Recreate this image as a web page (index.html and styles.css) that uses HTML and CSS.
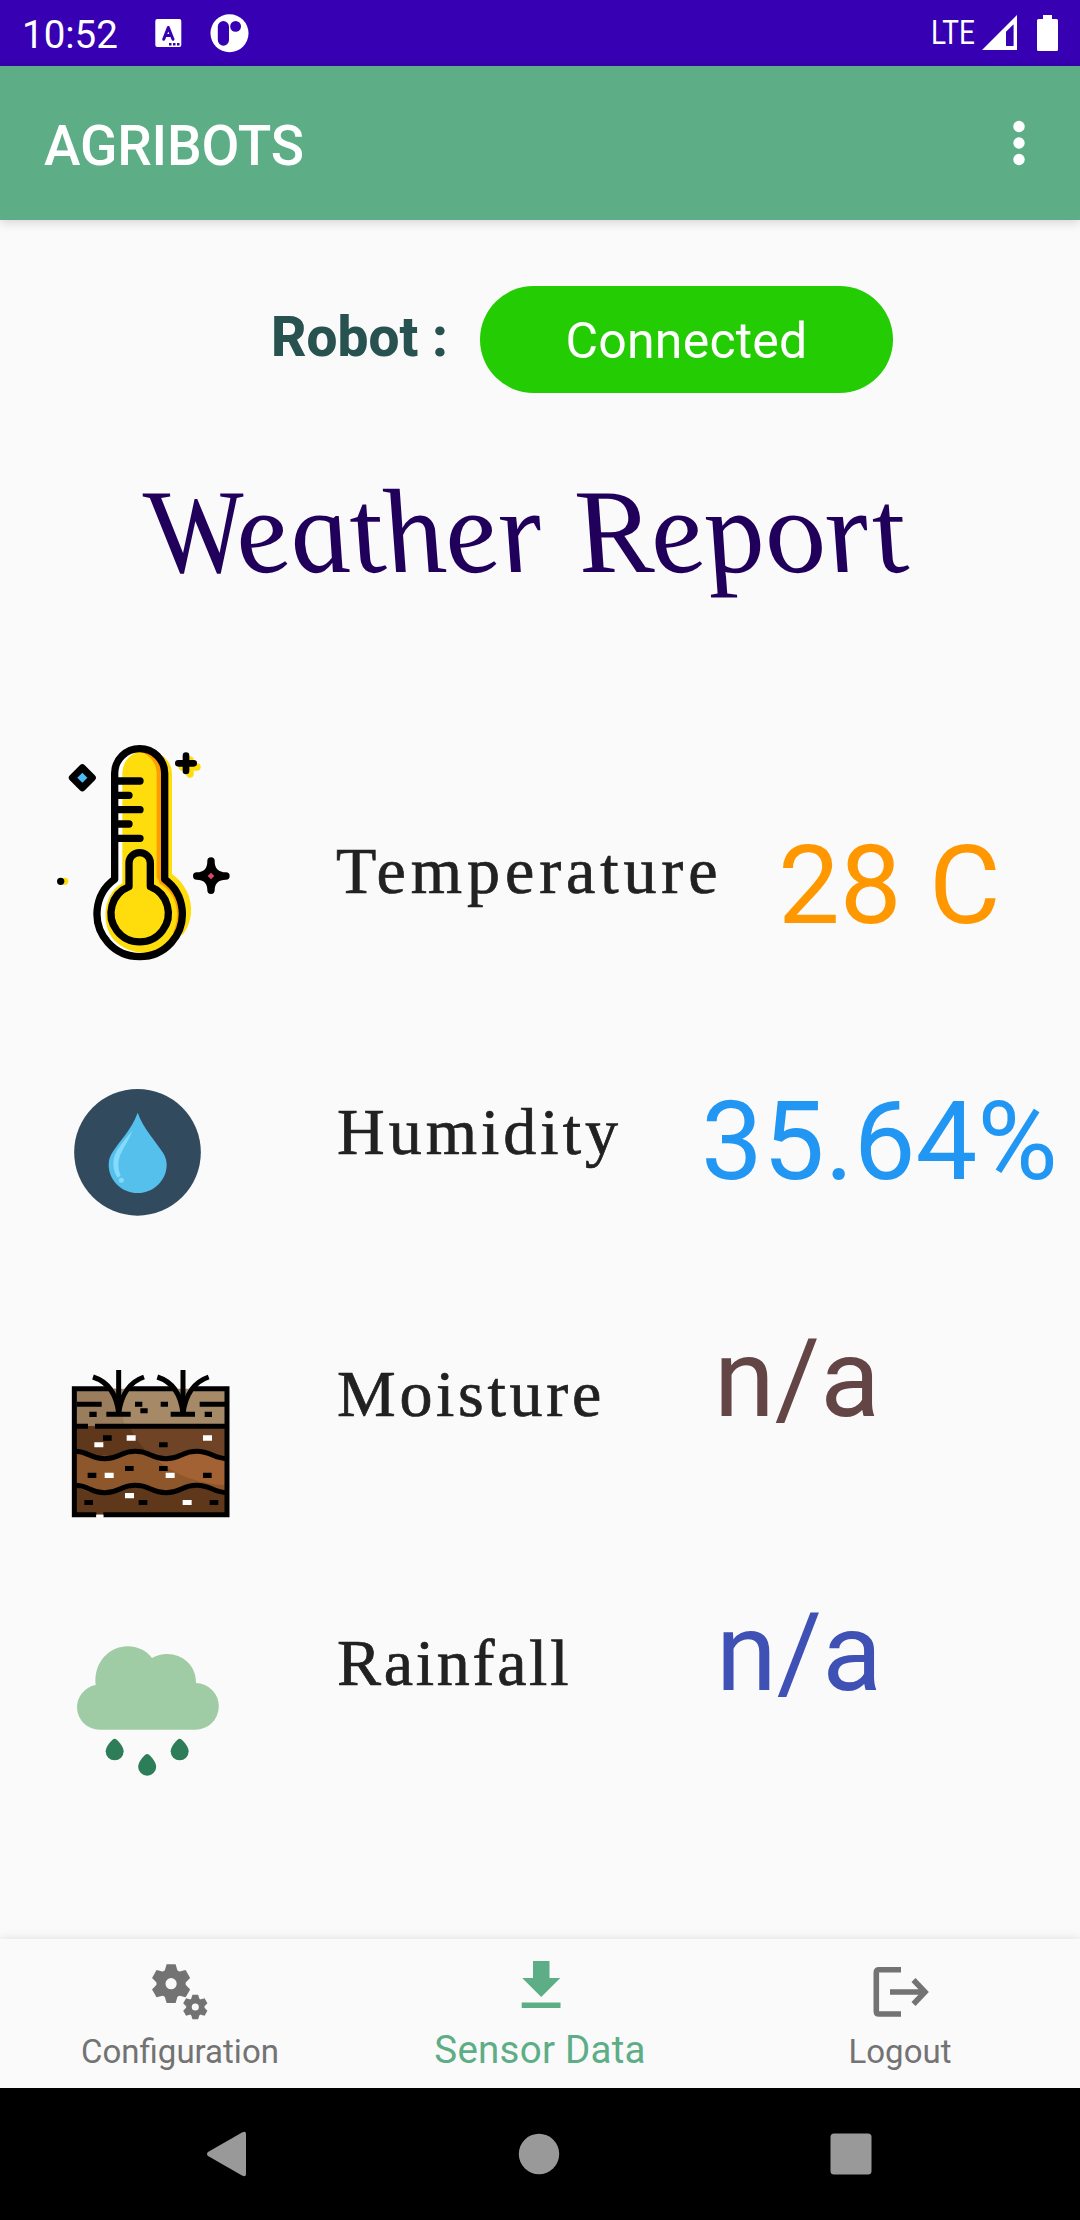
FILE: index.html
```html
<!DOCTYPE html>
<html lang="en">
<head>
<meta charset="utf-8">
<title>AGRIBOTS</title>
<link rel="stylesheet" href="styles.css">
</head>
<body>
<div class="screen">
  <div class="status-bar">
    <span class="clock">10:52</span>
    <svg class="notices" width="100" height="66" viewBox="150 0 100 66" fill="#fff">
      <rect x="155.3" y="19" width="26" height="28" rx="2"/>
      <path d="M163.7 39.3L168.3 27.5L173 39.3M165.3 35.6H171.5" fill="none" stroke="#3700b3" stroke-width="3" stroke-linecap="round" stroke-linejoin="round"/>
      <path d="M169 43h2.5v2.4H169zM173 43h2.5v2.4H173zM177 43h2.5v2.4H177z" fill="#3700b3"/>
      <circle cx="229.5" cy="33.2" r="19"/>
      <rect x="217.8" y="21" width="11.2" height="24.7" rx="5.6" fill="#3700b3"/>
      <circle cx="235.6" cy="26.4" r="5.4" fill="#3700b3"/>
    </svg>
    <span class="network">LTE</span>
    <svg class="signals" width="98" height="66" viewBox="982 0 98 66" fill="#fff">
      <path fill-rule="evenodd" d="M982 50L1017 15V50ZM1006 31.7V46H1013.6V24.2Z"/>
      <path d="M1043 15h9v4h4.500q1.500 0 1.500 1.500v29q0 1.500-1.500 1.500h-18q-1.500 0-1.500-1.500v-29q0-1.500 1.500-1.500h4.500z"/>
    </svg>
  </div>
  <header class="app-bar">
    <h1 class="app-title">AGRIBOTS</h1>
    <svg class="overflow" width="12" height="46" viewBox="0 0 12 46" fill="#fff">
      <circle cx="6" cy="6.500" r="5.700"/><circle cx="6" cy="23" r="5.700"/><circle cx="6" cy="39.500" r="5.700"/>
    </svg>
  </header>

  <main class="content">
    <div class="robot">
      <span class="robot-label">Robot :</span>
      <span class="robot-state">Connected</span>
    </div>
    <h2 class="report-title">Weather Report</h2>

    <section class="reading reading-temperature">
      <svg class="reading-icon" width="210" height="240" viewBox="0 0 630 720">
        <path d="M250 135C250 40 396 40 396 135V432C462 480 468 560 430 612L300 680L200 570Z" fill="#ffdc0b"/>
        <path d="M224 125a75 70 0 0 1 150 0V448C450 490 440 580 408 625C360 690 235 690 192 625C150 565 172 485 224 448Z" fill="#fff"/>
        <path d="M247 130a63 66 0 0 1 126 0V448C440 490 440 580 408 625C360 685 270 680 222 630C180 580 190 490 247 460Z" fill="#ffdc0b"/>
        <path d="M302 62C350 62 374 92 374 125V448C440 490 435 580 398 610C430 545 400 480 360 462L350 440V130C350 100 330 75 302 66Z" fill="#ff9d00"/>
        <g fill="none" stroke="#000" stroke-width="22" stroke-linecap="round" stroke-linejoin="round">
          <path d="M224 448V130a75 74 0 0 1 150 0V448A128 128 0 1 1 224 448Z"/>
          <path d="M267 470V398a32 30 0 0 1 64 0V470A86 86 0 1 1 267 470Z" fill="#ffdc0b"/>
          <path d="M224 153H300M224 196H267M224 239H300M224 282H267M224 325H300"/>
        </g>
        <path d="M450 90V132M427 111H471" stroke="#ffdc0b" stroke-width="22" stroke-linecap="round"/>
        <path d="M438 77V123M415 100H461" stroke="#000" stroke-width="20" stroke-linecap="round"/>
        <path d="M127 113L157 143L127 173L97 143Z" fill="#48bdf7" stroke="#000" stroke-width="21" stroke-linejoin="round"/>
        <circle cx="74" cy="454" r="11" fill="#ffdc0b"/><circle cx="62" cy="454" r="11"/>
        <path d="M513 393Q513 438 558 438Q513 438 513 481Q513 438 470 438Q513 438 513 393Z" stroke="#000" stroke-width="22" stroke-linejoin="round"/>
        <path d="M513 415L536 438L513 461L490 438Z"/>
        <path d="M513 428L523 438L513 448L503 438Z" fill="#dc4868"/>
      </svg>
      <span class="reading-name">Temperature</span>
      <span class="reading-value">28 C</span>
    </section>

    <section class="reading reading-humidity">
      <svg class="reading-icon" width="180" height="160" viewBox="0 0 540 480">
        <circle cx="262.500" cy="247" r="190" fill="#324a5e"/>
        <path d="M263 128C282 180 318 214 340 250C346 262 350 270 350 284C350 331 311 369 263 369C215 369 176 331 176 284C176 270 180 258 188 246C212 208 244 180 263 128Z" fill="#54c0eb"/>
        <path d="M248 181C220 217 190 244 190 279Q190 303 202 323L212 317Q204 300 205 281C207 247 234 219 248 181Z" fill="#84dbff"/>
        <circle cx="214" cy="331" r="7.500" fill="#84dbff"/>
      </svg>
      <span class="reading-name">Humidity</span>
      <span class="reading-value">35.64%</span>
    </section>

    <section class="reading reading-moisture">
      <svg class="reading-icon" width="180" height="170" viewBox="0 0 540 510">
        <path d="M43 86H501V198H43Z" fill="#a68a68"/>
        <path d="M43 86H180Q178 140 195 198H43Z" fill="#9a7d5c"/>
        <path d="M43 198H501V300H43Z" fill="#6f4325"/>
        <path d="M43 198H207Q225 240 270 285H43Z" fill="#5f381b"/>
        <path d="M43 275C110 310 130 300 180 283C220 265 250 275 280 287C340 310 370 270 425 275L501 295V390H43Z" fill="#a36233"/>
        <path d="M43 275C110 310 130 300 180 283C220 265 250 275 285 295Q370 370 501 376V400H43Z" fill="#8d562b"/>
        <path d="M43 377C110 410 130 403 180 385C220 370 250 375 280 389C340 410 370 372 425 377L501 396V464H43Z" fill="#5f381b"/>
        <g fill="none" stroke="#000" stroke-width="15">
          <path d="M149 86H43V464H109M130 464H501V86H400M205 86H342M43 199H84M105 199H501"/>
          <path d="M50 133H125M419 133H495M139 163H212M332 163H405M176 30V160M369 30V160"/>
          <path d="M99 51Q167 73 176 160Q188 73 252 51M292 51Q360 73 369 160Q381 73 446 51"/>
          <path d="M43 274C90 274 87 296 134 296C180 296 180 274 226 274C272 274 272 296 318 296C364 296 364 274 410 274C454 274 460 296 501 296M43 376C90 376 87 398 134 398C180 398 180 376 226 376C272 376 272 398 318 398C364 398 364 376 410 376C454 376 460 398 501 398"/>
        </g>
        <path d="M88 155h22v16h-22zM225 125h22v15h-22zM241 145h22v15h-22zM302 125h22v15h-22zM434 155h22v16h-22zM129 226h26v16h-26zM297 247h26v15h-26zM195 318h26v15h-26zM297 318h26v15h-26zM83 338h26v16H83zM429 338h26v16h-26zM73 420h26v15H73zM236 420h26v15h-26zM449 420h26v15h-26z"/>
        <path d="M200 226h27v16h-27zM429 226h27v16h-27zM103 247h27v15h-27zM134 338h27v16h-27zM317 338h27v16h-27zM195 399h27v16h-27zM368 420h27v15h-27zM109 464h21v8h-21z" fill="#fff"/>
      </svg>
      <span class="reading-name">Moisture</span>
      <span class="reading-value">n/a</span>
    </section>

    <section class="reading reading-rainfall">
      <svg class="reading-icon" width="180" height="160" viewBox="0 0 540 480">
        <path d="M118 299A67.500 67.500 0 0 1 107 165C100 95 150 49 203 49C232 49 258 61 276 84C335 51 410 90 408 159A70 70 0 0 1 405 299Z" fill="#9fcca5"/>
        <g fill="#2c7d58">
          <path id="drop" d="M164 326C171 326 191 349 191 364A27 27 0 0 1 137 364C137 349 157 326 164 326Z"/>
          <use href="#drop" x="97.500" y="46"/><use href="#drop" x="195"/>
        </g>
      </svg>
      <span class="reading-name">Rainfall</span>
      <span class="reading-value">n/a</span>
    </section>
  </main>

  <nav class="tabs">
    <a class="tab">
      <svg width="66" height="66" viewBox="147 1955 66 66" fill="#737373">
        <g id="gear" transform="translate(171.100 1983.700)">
          <circle r="10.100" fill="none" stroke="#737373" stroke-width="9"/>
          <path id="tooth" d="M-6.500-12.500L-4.500-19.400H4.500L6.500-12.500Z"/>
          <use href="#tooth" transform="rotate(60)"/><use href="#tooth" transform="rotate(120)"/><use href="#tooth" transform="rotate(180)"/><use href="#tooth" transform="rotate(240)"/><use href="#tooth" transform="rotate(300)"/>
        </g>
        <use href="#gear" transform="translate(195.300 2007) scale(.635) translate(-171.100 -1983.700)"/>
      </svg>
      <span class="tab-label">Configuration</span>
    </a>
    <a class="tab tab-active">
      <svg width="66" height="66" viewBox="507 1955 66 66" fill="#5dae86">
        <path d="M533 1961H549.500V1978H560.300L541.200 1997L522.200 1978H533ZM521.700 2002.400H560.500V2008H521.700Z"/>
      </svg>
      <span class="tab-label">Sensor Data</span>
    </a>
    <a class="tab">
      <svg width="66" height="66" viewBox="867 1955 66 66" fill="none" stroke="#737373" stroke-width="5.600">
        <path d="M901 1969.800H879Q876.300 1969.800 876.300 1972.500V2011.300Q876.300 2014 879 2014H901M890 1992H925M913.500 1980L925 1992L913.500 2004"/>
      </svg>
      <span class="tab-label">Logout</span>
    </a>
  </nav>

  <div class="system-nav">
    <svg width="42" height="48" viewBox="0 0 42 48" fill="#999"><path d="M2 22L36 2.500Q40 .5 40 4V44Q40 47.500 36 45.500L2 26Q0 24 2 22Z"/></svg>
    <svg width="42" height="48" viewBox="0 0 42 48" fill="#999"><circle cx="21" cy="24" r="20.200"/></svg>
    <svg width="42" height="48" viewBox="0 0 42 48" fill="#999"><rect x=".5" y="3.500" width="41" height="41" rx="3.500"/></svg>
  </div>
</div>
</body>
</html>
```
FILE: styles.css
```css
* { box-sizing: border-box; }
body { margin: 0; background: #fafafa; font-family: Roboto, sans-serif; }
svg { display: block; flex: none; }
h1, h2 { margin: 0; }

.screen { width: 1080px; height: 2220px; display: flex; flex-direction: column; overflow: hidden; }

.status-bar { height: 66px; flex: none; display: flex; background: #3700b3; color: #fff; padding-left: 22px; }
.clock { width: 128px; font-size: 38.5px; line-height: 70px; }
.network { width: 54px; margin-left: auto; margin-right: -3px; font-size: 34px; line-height: 65px; transform: scaleX(.82); transform-origin: left; }

.app-bar { height: 154px; flex: none; display: flex; align-items: center; justify-content: space-between; padding: 0 55px 0 44px; background: #5dae86; color: #fff; box-shadow: 0 2px 10px rgba(0, 0, 0, .16); }
.app-title { font-size: 55px; font-weight: 500; line-height: 66px; padding-top: 6px; letter-spacing: -.2px; }

.content { flex: 1; display: flex; flex-direction: column; }
.robot { display: flex; align-items: center; height: 107px; margin-top: 66px; padding-left: 271px; }
.robot-label { width: 209px; flex: none; font-size: 55px; font-weight: 800; line-height: 64px; padding-bottom: 5px; color: #28524f; }
.robot-state { width: 413px; height: 107px; border-radius: 54px; background: #24cc03; color: #fff; text-align: center; font-size: 50px; line-height: 110px; letter-spacing: .2px; }

/* Italic letterforms stood upright give the heading its calligraphic look. */
.report-title { height: 337px; padding: 67px 0 0 159px; font: italic 400 120px/144px "Liberation Serif", serif; letter-spacing: .6px; color: #20005a; white-space: nowrap; transform: skewX(14deg); transform-origin: 0 200px; }

.reading { display: grid; align-items: start; white-space: nowrap; }
.reading-name { font: 66px/80px "Liberation Serif", serif; letter-spacing: 4px; color: #212121; -webkit-text-stroke: .7px #212121; }
.reading-value { font-size: 110px; line-height: 110px; }

.reading-temperature { height: 330px; grid-template-columns: 336px 442px 1fr; }
.reading-temperature .reading-icon { margin-left: 40px; }
.reading-temperature .reading-name { margin-top: 101px; letter-spacing: 4.9px; }
.reading-temperature .reading-value { margin-top: 101px; color: #ff9800; }

.reading-humidity { height: 260px; grid-template-columns: 337px 364px 1fr; }
.reading-humidity .reading-icon { margin: 10px 0 0 50px; }
.reading-humidity .reading-name { margin-top: 32px; }
.reading-humidity .reading-value { margin-top: 27px; color: #2196f3; }

.reading-moisture { height: 270px; grid-template-columns: 337px 377px 1fr; }
.reading-moisture .reading-icon { margin: 40px 0 0 60px; }
.reading-moisture .reading-name { margin-top: 34px; letter-spacing: 3.7px; }
.reading-moisture .reading-value { margin-top: 4px; color: #634545; }

.reading-rainfall { grid-template-columns: 337px 379px 1fr; }
.reading-rainfall .reading-icon { margin: 40px 0 0 60px; }
.reading-rainfall .reading-name { margin-top: 33px; letter-spacing: 2.7px; }
.reading-rainfall .reading-value { margin-top: 8px; color: #3f51b5; }

.tabs { height: 149px; flex: none; display: grid; grid-template-columns: repeat(3, 1fr); background: #fafafa; box-shadow: 0 0 9px rgba(0, 0, 0, .12); }
.tab { display: flex; flex-direction: column; align-items: center; padding-top: 16px; color: #737373; font-size: 33px; }
.tab-label { margin-top: 8px; line-height: 46px; }
.tab-active { color: #5dae86; font-size: 38.5px; letter-spacing: .25px; }
.tab-active .tab-label { margin-top: 6px; }

.system-nav { position: relative; height: 132px; flex: none; display: flex; justify-content: space-between; align-items: center; padding: 0 208px 0 206px; background: #000; }
```
